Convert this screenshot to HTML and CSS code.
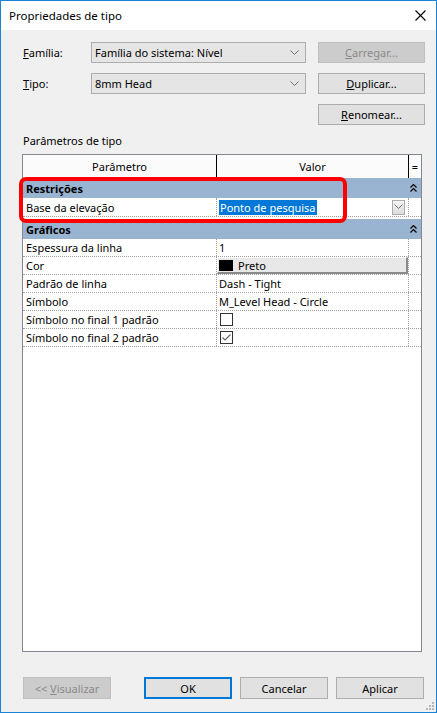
FILE: index.html
```html
<!DOCTYPE html>
<html lang="pt">

<head>
    <meta charset="UTF-8">
    <title>Propriedades de tipo</title>
    <link rel="stylesheet" href="styles.css">
</head>

<body>
    <div class="window">
        <div class="titlebar">
            <span class="title">Propriedades de tipo</span>
            <svg class="close" width="11" height="11" viewBox="0 0 11 11">
                <path d="M0.5 0.5 L10.5 10.5 M10.5 0.5 L0.5 10.5" stroke="#000" stroke-width="1.1" fill="none" />
            </svg>
        </div>

        <div class="content">
            <div class="form">
                <label class="lbl"><u>F</u>amília:</label>
                <div class="combo"><span>Família do sistema: Nível</span>
                    <svg width="9" height="6" viewBox="0 0 9 6"><path d="M0.5 0.5 L4.5 4.5 L8.5 0.5" stroke="#707070" fill="none" /></svg>
                </div>
                <button type="button" class="btn disabled"><u>C</u>arregar...</button>

                <label class="lbl"><u>T</u>ipo:</label>
                <div class="combo"><span>8mm Head</span>
                    <svg width="9" height="6" viewBox="0 0 9 6"><path d="M0.5 0.5 L4.5 4.5 L8.5 0.5" stroke="#707070" fill="none" /></svg>
                </div>
                <button type="button" class="btn"><u>D</u>uplicar...</button>

                <span></span>
                <span></span>
                <button type="button" class="btn"><u>R</u>enomear...</button>
            </div>

            <div class="section">Parâmetros de tipo</div>

            <div class="grid">
                <div class="row head">
                    <div class="cell">Parâmetro</div>
                    <div class="cell">Valor</div>
                    <div class="cell eq">=</div>
                </div>

                <div class="group">
                    <span>Restrições</span>
                    <svg class="fold" width="7" height="8" viewBox="0 0 7 8"><path d="M0.5 3.5 L3.5 0.5 L6.5 3.5 M0.5 7.5 L3.5 4.5 L6.5 7.5" stroke="#000" stroke-width="1.2" fill="none" /></svg>
                </div>
                <div class="row prop tall">
                    <div class="cell">Base da elevação</div>
                    <div class="cell val">
                        <span class="selected">Ponto de pesquisa</span>
                        <span class="drop"><svg width="9" height="6" viewBox="0 0 9 6"><path d="M0.5 0.5 L4.5 4.5 L8.5 0.5" stroke="#707070" fill="none" /></svg></span>
                    </div>
                    <div class="cell"></div>
                </div>

                <div class="group second">
                    <span>Gráficos</span>
                    <svg class="fold" width="7" height="8" viewBox="0 0 7 8"><path d="M0.5 3.5 L3.5 0.5 L6.5 3.5 M0.5 7.5 L3.5 4.5 L6.5 7.5" stroke="#000" stroke-width="1.2" fill="none" /></svg>
                </div>
                <div class="row prop">
                    <div class="cell">Espessura da linha</div>
                    <div class="cell val">1</div>
                    <div class="cell"></div>
                </div>
                <div class="row prop">
                    <div class="cell">Cor</div>
                    <div class="cell val colorcell">
                        <span class="colorbtn"><span class="swatch"></span>Preto</span>
                    </div>
                    <div class="cell"></div>
                </div>
                <div class="row prop">
                    <div class="cell">Padrão de linha</div>
                    <div class="cell val">Dash - Tight</div>
                    <div class="cell"></div>
                </div>
                <div class="row prop">
                    <div class="cell">Símbolo</div>
                    <div class="cell val">M_Level Head - Circle</div>
                    <div class="cell"></div>
                </div>
                <div class="row prop">
                    <div class="cell">Símbolo no final 1 padrão</div>
                    <div class="cell val"><span class="check"></span></div>
                    <div class="cell"></div>
                </div>
                <div class="row prop">
                    <div class="cell">Símbolo no final 2 padrão</div>
                    <div class="cell val">
                        <span class="check"><svg width="11" height="11" viewBox="0 0 11 11"><path d="M1.5 5.5 L4 8 L9.5 2.5" stroke="#666" stroke-width="1.2" fill="none" /></svg></span>
                    </div>
                    <div class="cell"></div>
                </div>

                <div class="highlight"></div>
            </div>

            <div class="footer">
                <button type="button" class="btn disabled preview">&lt;&lt; <u>V</u>isualizar</button>
                <button type="button" class="btn default">OK</button>
                <button type="button" class="btn">Cancelar</button>
                <button type="button" class="btn">Aplicar</button>
            </div>
        </div>

        <svg class="grip" width="9" height="9" viewBox="0 0 9 9">
            <rect x="7" y="1" width="2" height="2" fill="#b8b8b8" />
            <rect x="4" y="4" width="2" height="2" fill="#b8b8b8" />
            <rect x="7" y="4" width="2" height="2" fill="#b8b8b8" />
            <rect x="1" y="7" width="2" height="2" fill="#b8b8b8" />
            <rect x="4" y="7" width="2" height="2" fill="#b8b8b8" />
            <rect x="7" y="7" width="2" height="2" fill="#b8b8b8" />
        </svg>
    </div>
</body>

</html>
```

FILE: styles.css
```css
body {
    margin: 0;
    font-family: "Noto Sans", sans-serif;
    font-size: 11px;
    color: #000;
}

.window {
    position: relative;
    width: 437px;
    height: 713px;
    box-sizing: border-box;
    border: 1px solid #1883d7;
    background: #f0f0f0;
    display: flex;
    flex-direction: column;
}

.titlebar {
    height: 29px;
    background: #fff;
    display: flex;
    align-items: center;
    justify-content: space-between;
    padding: 0 10px 0 8px;
}

.title {
    font-size: 11.5px;
}

.content {
    padding: 12px 11px 0 21px;
}

.form {
    display: grid;
    grid-template-columns: 57px 215px 107px;
    grid-auto-rows: 21px;
    column-gap: 12px;
    row-gap: 10px;
    align-items: center;
}

.lbl {
    padding-left: 1px;
}

.combo {
    height: 21px;
    box-sizing: border-box;
    border: 1px solid #adadad;
    background: #e5e5e5;
    display: flex;
    align-items: center;
    justify-content: space-between;
    padding: 0 6px 0 3px;
}

.btn {
    height: 21px;
    box-sizing: border-box;
    border: 1px solid #adadad;
    background: #e1e1e1;
    font: 11px "Noto Sans", sans-serif;
    color: #000;
    padding: 0;
}

.btn.disabled {
    background: #cccccc;
    border-color: #bfbfbf;
    color: #8a8a8a;
}

.section {
    margin-top: 8px;
    height: 16px;
    line-height: 16px;
    margin-bottom: 5px;
    padding-left: 1px;
}

.grid {
    position: relative;
    width: 400px;
    height: 498px;
    box-sizing: border-box;
    border: 1px solid #828790;
    background: #fff;
}

.row {
    display: grid;
    grid-template-columns: 194px 192px 12px;
}

.row.head {
    height: 23px;
    background: #fbfbfb;
}

.head .cell {
    display: flex;
    align-items: center;
    justify-content: center;
    border-right: 1px solid #000;
}

.head .cell.eq {
    border-right: 0;
}

.group {
    height: 20px;
    background: #99b4d1;
    display: flex;
    align-items: center;
    justify-content: space-between;
    padding: 0 3px 0 3px;
    font-weight: bold;
}

.group.second {
    margin-top: 2px;
}

.fold {
    margin-right: 1px;
}

.row.prop {
    height: 18px;
    box-sizing: border-box;
    border-bottom: 1px dotted #a0a0a0;
}

.row.prop.tall {
    height: 19px;
}

.prop .cell {
    display: flex;
    align-items: center;
    padding-left: 3px;
    border-right: 1px dotted #a0a0a0;
    box-sizing: border-box;
    white-space: nowrap;
}

.prop .cell:last-child {
    border-right: 0;
}

.prop .cell.val {
    padding-left: 2px;
    justify-content: space-between;
}

.selected {
    background: #0078d7;
    color: #fff;
    padding: 0 1px;
    line-height: 15px;
}

.drop {
    width: 13px;
    height: 15px;
    box-sizing: border-box;
    border: 1px solid #acacac;
    background: linear-gradient(#f4f4f4, #dcdcdc);
    display: flex;
    align-items: center;
    justify-content: center;
    margin-right: 3px;
}

.colorcell.cell.val {
    padding: 0;
}

.colorbtn {
    flex: 1;
    height: 17px;
    box-sizing: border-box;
    background: #e8e8e8;
    border-top: 1px solid #fff;
    border-left: 1px solid #fff;
    border-right: 2px solid #8a8a8a;
    border-bottom: 2px solid #8a8a8a;
    display: flex;
    align-items: center;
    padding-left: 1px;
}

.swatch {
    width: 14px;
    height: 11px;
    background: #000;
    margin-right: 5px;
}

.check {
    width: 13px;
    height: 13px;
    box-sizing: border-box;
    border: 1px solid #333;
    background: #fff;
    display: flex;
    align-items: center;
    justify-content: center;
    margin-left: 1px;
}

.highlight {
    position: absolute;
    left: -4px;
    top: 22px;
    width: 328px;
    height: 46px;
    box-sizing: border-box;
    border: 4px solid #ff0000;
    border-radius: 7px;
}

.footer {
    display: flex;
    margin-top: 25px;
    padding-left: 1px;
    gap: 8px;
}

.footer .btn {
    width: 88px;
    height: 22px;
}

.footer .preview {
    margin-right: 25px;
}

.btn.default {
    border: 2px solid #0078d7;
}

.grip {
    position: absolute;
    right: 2px;
    bottom: 2px;
}
```
